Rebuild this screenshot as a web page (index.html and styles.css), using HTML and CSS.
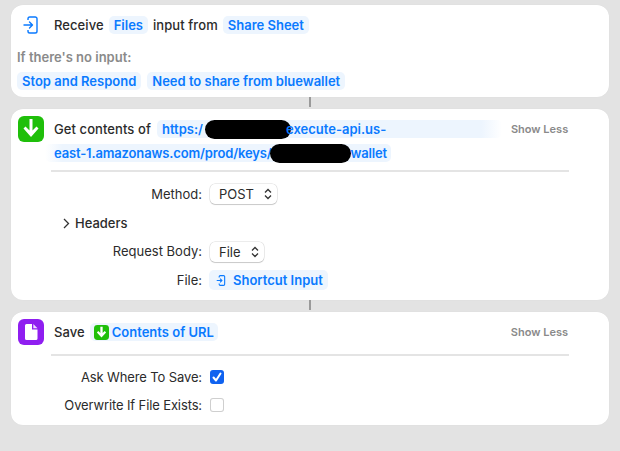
FILE: index.html
```html
<!DOCTYPE html>
<html lang="en">
<head>
<meta charset="utf-8">
<title>Shortcut</title>
<link rel="stylesheet" href="styles.css">
</head>
<body>
<main class="flow">
  <section class="card card-receive">
    <div class="row head-receive">
      <svg class="receive-icon" width="16" height="18" viewBox="0 0 16 18" fill="none" stroke="#0a7aff" stroke-width="1.4"><path d="M5 4V2.800A1.800 1.800 0 0 1 6.800 1h5.400A1.800 1.800 0 0 1 14 2.800v12.400a1.800 1.800 0 0 1-1.800 1.800H6.800A1.800 1.800 0 0 1 5 15.200V14"/><path d="M1 9h8M6.500 6l3 3-3 3" stroke-linecap="round" stroke-linejoin="round"/></svg>
      <span class="strong">Receive</span><span class="pill">Files</span><span class="strong">input from</span><span class="pill">Share Sheet</span>
    </div>
    <div class="muted">If there's no input:</div>
    <div class="row options"><span class="pill">Stop and Respond</span><span class="pill">Need to share from bluewallet</span></div>
  </section>
  <div class="connector"></div>
  <section class="card card-get">
    <div class="head-get">
      <svg class="app-icon" width="26" height="26" viewBox="0 0 26 26"><rect width="26" height="26" rx="6" fill="#1fbf0a"/><path d="M11.500 3h3v11.500l4-4 2 2L13 21l-7.500-8.500 2-2 4 4z" fill="#fff"/></svg>
      <div class="url-block">
        <div class="url-first"><span class="strong">Get contents of</span><span class="pill url url-a">https:/<span class="redact redact-a"></span>execute-api.us-</span><span class="show">Show Less</span></div>
        <div class="pill url url-b">east-1.amazonaws.com/prod/keys/<span class="redact redact-b"></span>wallet</div>
      </div>
    </div>
    <div class="rule"></div>
    <div class="form">
      <div class="label row-method">Method:</div>
      <div class="select select-post">POST<svg width="8" height="12" viewBox="0 0 8 12" fill="none" stroke="#333" stroke-width="1.3"><path d="M1 4.500 4 1.500l3 3M1 7.500l3 3 3-3"/></svg></div>
      <div class="disclosure"><svg width="7" height="11" viewBox="0 0 7 11" fill="none" stroke="#333" stroke-width="1.3"><path d="m1 1 4.500 4.500L1 10"/></svg><span>Headers</span></div>
      <div class="label">Request Body:</div>
      <div class="select select-file">File<svg width="8" height="12" viewBox="0 0 8 12" fill="none" stroke="#333" stroke-width="1.3"><path d="M1 4.500 4 1.500l3 3M1 7.500l3 3 3-3"/></svg></div>
      <div class="label">File:</div>
      <div><span class="pill input-pill"><svg width="10" height="11" viewBox="0 0 16 18" fill="none" stroke="#0a7aff" stroke-width="1.800"><path d="M5 4V2.800A1.800 1.800 0 0 1 6.800 1h5.400A1.800 1.800 0 0 1 14 2.800v12.400a1.800 1.800 0 0 1-1.800 1.800H6.800A1.800 1.800 0 0 1 5 15.200V14"/><path d="M1 9h8M6.500 6l3 3-3 3"/></svg>Shortcut Input</span></div>
    </div>
  </section>
  <div class="connector"></div>
  <section class="card card-save">
    <div class="head-save">
      <svg class="app-icon" width="26" height="26" viewBox="0 0 26 26"><rect width="26" height="26" rx="6" fill="#8f1ef0"/><path d="M7 6.500A1.500 1.500 0 0 1 8.500 5H14v5.500h5.500v9A1.500 1.500 0 0 1 18 21H8.500A1.500 1.500 0 0 1 7 19.500z" fill="#fff"/><path d="M15.300 5 19.500 9.200h-4.200z" fill="#f0ddff"/></svg>
      <span class="strong">Save</span>
      <span class="pill save-pill"><svg width="15" height="15" viewBox="0 0 26 26"><rect width="26" height="26" rx="6" fill="#1fbf0a"/><path d="M11 3h4v11l3.500-3.500 2.500 2.500-8 8.500-8-8.500 2.500-2.500 3.500 3.500z" fill="#fff"/></svg>Contents of URL</span>
      <span class="show show-save">Show Less</span>
    </div>
    <div class="rule"></div>
    <div class="form form-save">
      <div class="label tight">Ask Where To Save:</div>
      <div class="check checked"><svg width="12" height="12" viewBox="0 0 12 12" fill="none" stroke="#fff" stroke-width="2" stroke-linecap="round" stroke-linejoin="round"><path d="m2.500 6.500 2.500 3 4.500-7"/></svg></div>
      <div class="label tight">Overwrite If File Exists:</div>
      <div class="check"></div>
    </div>
  </section>
</main>
</body>
</html>
```
FILE: styles.css
```css
* { box-sizing: border-box; }
html, body { margin: 0; height: 451px; overflow: hidden; }
body {
  background: #e3e3e3;
  color: #2b2b2b;
  font: 400 13px/18px Inter, "Liberation Sans", sans-serif;
}
.flow { padding: 5px 11px 0; display: flex; flex-direction: column; }
.card {
  background: #fff;
  border-radius: 12px;
  box-shadow: 0 0 1px rgba(0,0,0,.08);
}
.connector { width: 2px; height: 12px; margin-left: 298px; background: linear-gradient(#9a9a9a 0 10px, transparent 10px); }
.row { display: flex; align-items: center; }
.strong { font-weight: 500; letter-spacing: .08px; white-space: nowrap; }
.pill {
  display: inline-flex; align-items: center;
  height: 18px; padding: 0 5px;
  background: #edf5fe; color: #0a7aff;
  border-radius: 5px; font-weight: 600; white-space: nowrap;
}
.card-receive { height: 92px; padding: 11px 6px 0; }
.head-receive { height: 18px; gap: 5px; padding-left: 6px; }
.receive-icon { margin-right: 10px; }
.muted { margin-top: 14px; color: #8a8a8a; font-weight: 600; }
.options { gap: 6px; margin-top: 6px; }

.card-get { height: 191px; padding-top: 7px; }
.head-get { display: flex; padding-left: 7px; }
.app-icon { flex: none; }
.url-block { margin-left: 1px; width: 524px; }
.url-first { display: flex; align-items: center; margin-top: 4px; height: 18px; padding-left: 9px; }
.url-a { width: 345px; margin-left: 6px; background: linear-gradient(90deg, #edf5fe 94%, #fff); }
.url-b { width: 346px; margin-top: 6px; padding-left: 9px; letter-spacing: -.15px; background: linear-gradient(90deg, #fff, #edf5fe 5%); }
.redact { display: inline-block; height: 19px; background: #000; border-radius: 10px; flex: none; }
.redact-a { width: 86px; margin-left: 2px; margin-right: -5px; }
.redact-b { width: 81px; margin-left: -1px; margin-right: -1px; }
.show { margin-left: 9px; color: #8a8a8a; font-size: 11px; font-weight: 600; white-space: nowrap; }
.rule { height: 2px; margin: 0 40px; background: #e4e4e4; }
.card-get .rule { margin-top: 8px; }
.form {
  display: grid;
  grid-template-columns: 191px 1fr;
  column-gap: 8px;
  align-items: center;
  margin-top: 12px;
}
.label { text-align: right; white-space: nowrap; }
.tight { letter-spacing: -.12px; }
.select {
  display: inline-flex; align-items: center; justify-content: space-between;
  height: 20px; padding: 0 5px 0 9px;
  background: #fff; border-radius: 5px;
  box-shadow: 0 0 0 .5px rgba(0,0,0,.15), 0 1px 1px rgba(0,0,0,.15);
}
.select-post { width: 67px; }
.select-file { width: 54px; margin: 10px 0 8px; }
.disclosure {
  grid-column: 1 / -1;
  display: flex; align-items: center; gap: 5px;
  padding-left: 52px; margin-top: 10px; font-weight: 500;
}
.input-pill { height: 20px; gap: 7px; padding: 0 5px 0 7px; margin-left: -1px; }

.card-save { height: 113px; padding-top: 7px; }
.head-save { display: flex; align-items: center; padding-left: 7px; height: 26px; }
.head-save .strong { margin-left: 10px; }
.save-pill { margin-left: 5px; gap: 3px; padding: 0 4px; }
.show-save { margin-left: auto; margin-right: 41px; }
.card-save .rule { margin-top: 9px; }
.form-save { row-gap: 10px; margin-top: 12px; }
.check {
  width: 14px; height: 14px; border-radius: 3px;
  display: flex; align-items: center; justify-content: center;
  box-shadow: inset 0 0 0 1px #cfcfcf;
}
.checked { background: #0f62f0; box-shadow: none; }
```
